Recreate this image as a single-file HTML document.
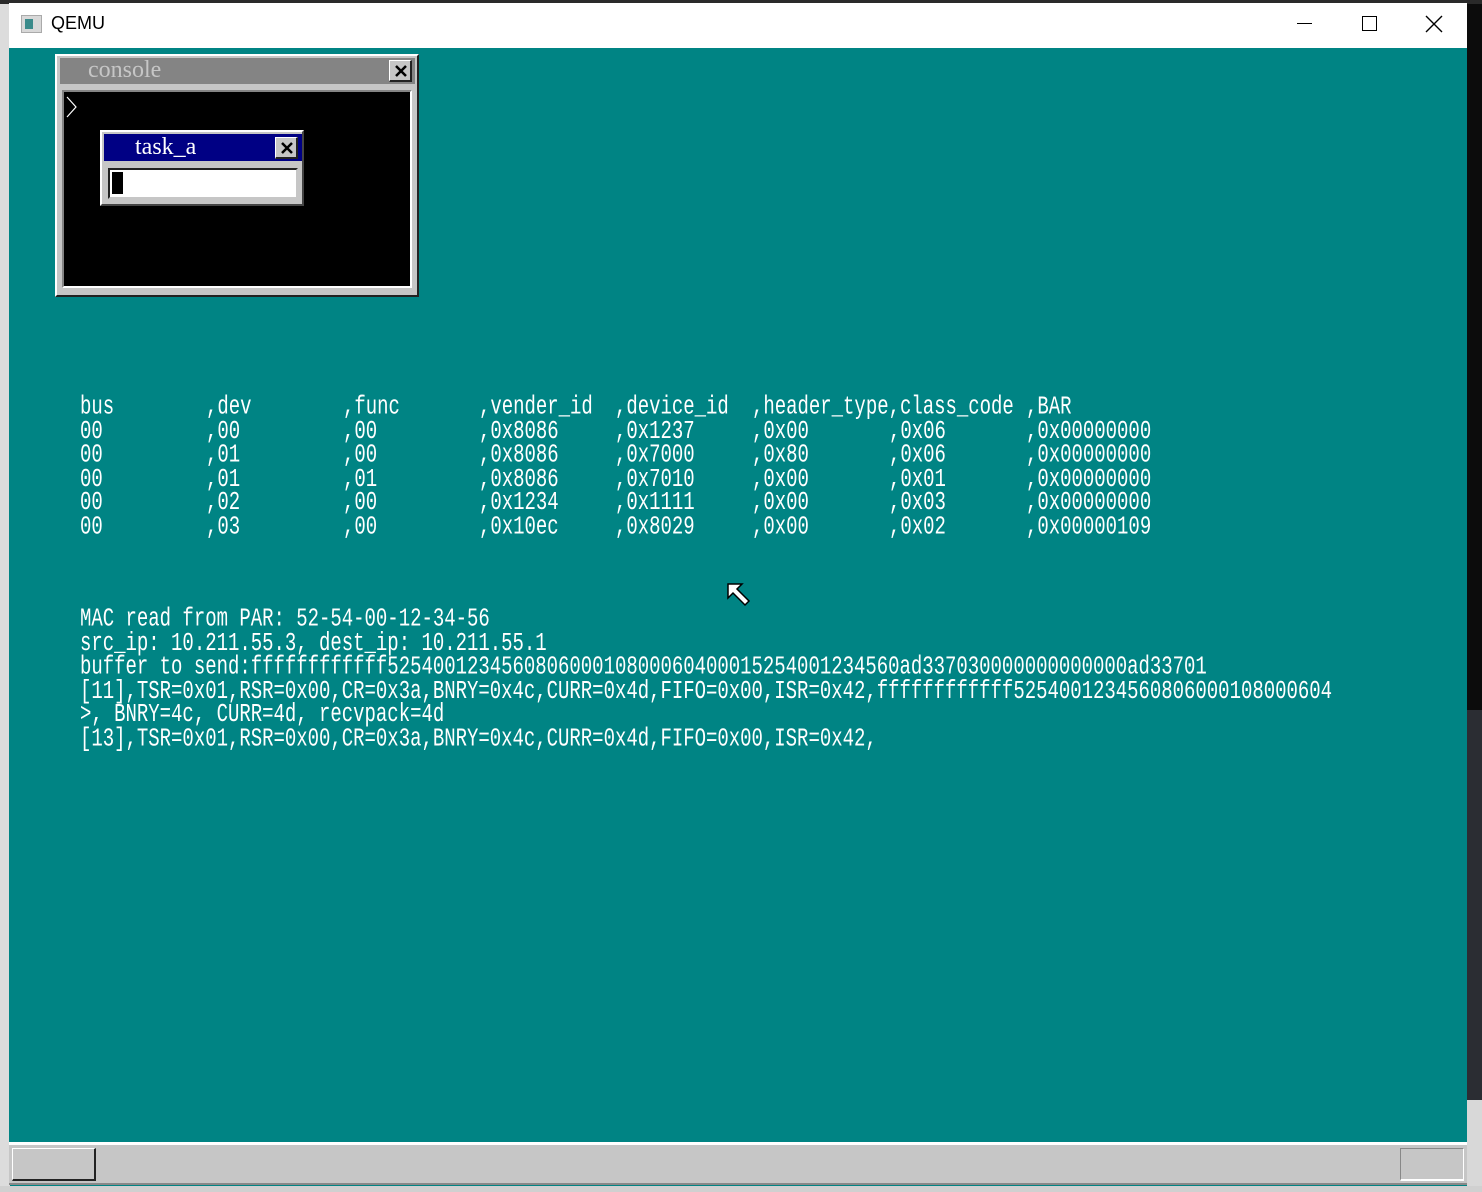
<!DOCTYPE html>
<html><head><meta charset="utf-8"><style>
*{margin:0;padding:0;box-sizing:border-box}
body{width:1482px;height:1192px;position:relative;overflow:hidden;background:#008484;font-family:"Liberation Mono",monospace}
.a{position:absolute}
.t{position:absolute;color:#fff;font-size:19px;line-height:17.5px;white-space:pre;transform:scaleY(1.36);transform-origin:0 0;letter-spacing:-0.02px}
</style></head><body>
<div class="a" style="left:0;top:0;width:10px;height:1192px;background:#dcdcdc"></div>
<div class="a" style="left:1467px;top:0;width:15px;height:710px;background:#0c0c0c"></div>
<div class="a" style="left:1467px;top:710px;width:15px;height:390px;background:#2b2d33"></div>
<div class="a" style="left:1467px;top:1100px;width:15px;height:92px;background:#d8d8d8"></div>
<div class="a" style="left:0;top:1186px;width:1482px;height:6px;background:#d0d0d0"></div>
<div class="a" style="left:0;top:0;width:1482px;height:4px;background:#2a2a2a"></div>
<div class="a" style="left:9px;top:3px;width:1458px;height:45px;background:#fff"></div>
<div class="a" style="left:21px;top:15px;width:21px;height:18px;background:#d8d8d8;border:1px solid #aaa"><div style="position:absolute;left:3px;top:3px;width:8px;height:10px;background:#3a8a8a"></div></div>
<div class="a" style="left:51px;top:13px;font-family:'Liberation Sans',sans-serif;font-size:18px;color:#000">QEMU</div>
<div class="a" style="left:1297px;top:23px;width:15px;height:1px;background:#000"></div>
<div class="a" style="left:1362px;top:16px;width:15px;height:15px;border:1px solid #000"></div>
<svg class="a" style="left:1425px;top:15px" width="18" height="18"><path d="M1 1L17 17M17 1L1 17" stroke="#000" stroke-width="1.4"/></svg>
<div class="a" style="left:9px;top:48px;width:1458px;height:1094px;background:#008484"></div>
<div class="a" style="left:55px;top:54px;width:364px;height:243px;background:#c6c6c6;border-top:2px solid #fff;border-left:2px solid #fff;border-right:2px solid #222;border-bottom:2px solid #222"></div>
<div class="a" style="left:60px;top:58px;width:355px;height:26px;background:#848484"></div>
<div class="a" style="left:88px;top:57px;font-family:'Liberation Serif',serif;font-size:24px;color:#c6c6c6">console</div>
<div class="a" style="left:389px;top:60px;width:23px;height:22px;background:#c6c6c6;border-top:1px solid #fff;border-left:1px solid #fff;border-right:2px solid #222;border-bottom:2px solid #222"></div>
<svg class="a" style="left:394px;top:64px" width="14" height="14"><path d="M2 2L12 12M12 2L2 12" stroke="#000" stroke-width="2.5"/></svg>
<div class="a" style="left:62px;top:90px;width:350px;height:198px;background:#000;border-top:2px solid #848484;border-left:2px solid #848484;border-right:2px solid #fff;border-bottom:2px solid #fff"></div>
<svg class="a" style="left:65px;top:96px" width="14" height="22"><path d="M2 1L11 11L2 21" stroke="#fff" stroke-width="1.2" fill="none"/></svg>
<div class="a" style="left:100px;top:130px;width:204px;height:76px;background:#c6c6c6;border-top:2px solid #fff;border-left:2px solid #fff;border-right:2px solid #444;border-bottom:2px solid #444"></div>
<div class="a" style="left:104px;top:134px;width:198px;height:27px;background:#000084"></div>
<div class="a" style="left:135px;top:134px;font-family:'Liberation Serif',serif;font-size:24px;color:#fff">task_a</div>
<div class="a" style="left:275px;top:137px;width:23px;height:22px;background:#c6c6c6;border-top:1px solid #fff;border-left:1px solid #fff;border-right:2px solid #222;border-bottom:2px solid #222"></div>
<svg class="a" style="left:280px;top:141px" width="14" height="14"><path d="M2 2L12 12M12 2L2 12" stroke="#000" stroke-width="2.5"/></svg>
<div class="a" style="left:108px;top:168px;width:190px;height:31px;background:#fff;border-top:2px solid #222;border-left:2px solid #222;border-right:2px solid #c6c6c6;border-bottom:2px solid #c6c6c6"></div>
<div class="a" style="left:112px;top:172px;width:11px;height:22px;background:#000"></div>
<div class="t" style="left:80px;top:396px">bus
00
00
00
00
00</div>
<div class="t" style="left:206px;top:396px">,dev
,00
,01
,01
,02
,03</div>
<div class="t" style="left:343px;top:396px">,func
,00
,00
,01
,00
,00</div>
<div class="t" style="left:479px;top:396px">,vender_id
,0x8086
,0x8086
,0x8086
,0x1234
,0x10ec</div>
<div class="t" style="left:615px;top:396px">,device_id
,0x1237
,0x7000
,0x7010
,0x1111
,0x8029</div>
<div class="t" style="left:752px;top:396px">,header_type,class_code
,0x00
,0x80
,0x00
,0x00
,0x00</div>
<div class="t" style="left:889px;top:396px">
,0x06
,0x06
,0x01
,0x03
,0x02</div>
<div class="t" style="left:1026px;top:396px">,BAR
,0x00000000
,0x00000000
,0x00000000
,0x00000000
,0x00000109</div>
<div class="t" style="left:80px;top:608px">MAC read from PAR: 52-54-00-12-34-56
src_ip: 10.211.55.3, dest_ip: 10.211.55.1
buffer to send:ffffffffffff525400123456080600010800060400015254001234560ad337030000000000000ad33701
[11],TSR=0x01,RSR=0x00,CR=0x3a,BNRY=0x4c,CURR=0x4d,FIFO=0x00,ISR=0x42,ffffffffffff5254001234560806000108000604
>, BNRY=4c, CURR=4d, recvpack=4d
[13],TSR=0x01,RSR=0x00,CR=0x3a,BNRY=0x4c,CURR=0x4d,FIFO=0x00,ISR=0x42,</div>
<svg class="a" style="left:726px;top:582px" width="26" height="26"><path d="M2 2L16 2L11 7L23 19L19 23L7 11L2 16Z" fill="#fff" stroke="#000" stroke-width="1.5"/></svg>
<div class="a" style="left:9px;top:1142px;width:1458px;height:3px;background:#fff"></div>
<div class="a" style="left:9px;top:1145px;width:1458px;height:40px;background:#c6c6c6;border-bottom:2px solid #888"></div>
<div class="a" style="left:12px;top:1148px;width:84px;height:33px;border-top:1px solid #fff;border-left:1px solid #fff;border-right:2px solid #222;border-bottom:2px solid #222"></div>
<div class="a" style="left:1400px;top:1148px;width:64px;height:33px;border-top:1px solid #888;border-left:1px solid #888;border-right:1px solid #fff;border-bottom:2px solid #fff"></div>
</body></html>
